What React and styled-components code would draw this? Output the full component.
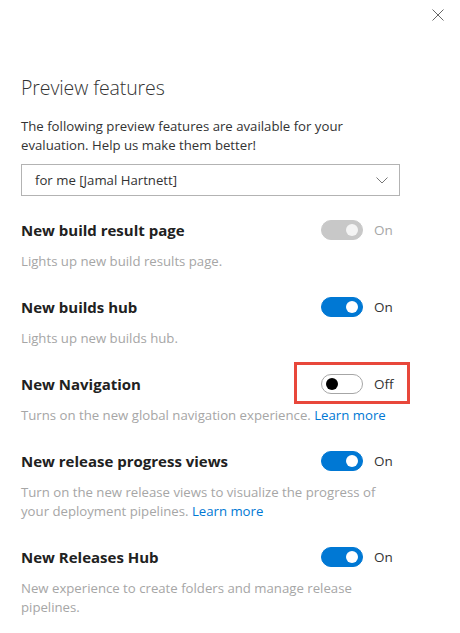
import React from 'react';
import styled, { createGlobalStyle } from 'styled-components';

const colors = {
    text: '#333333',
    heading: '#212121',
    muted: '#a6a6a6',
    blue: '#0078d4',
    border: '#b3b3b3',
    disabled: '#c8c8c8',
    red: '#e8473b',
};

const GlobalStyle = createGlobalStyle`
    body {
        margin: 0;
        background: #ffffff;
        font-family: "Open Sans", "Noto Sans", sans-serif;
        color: ${colors.text};
    }
`;

const Panel = styled.div`
    width: 460px;
    height: 633px;
    box-sizing: border-box;
    padding: 0 21px;
    overflow: hidden;
`;

const CloseBar = styled.div`
    display: flex;
    justify-content: flex-end;
    padding-top: 9px;
    margin-right: -5px;
    height: 12px;
`;

const CloseButton = styled.button`
    border: 0;
    background: none;
    padding: 0;
    width: 12px;
    height: 12px;
    display: flex;
    cursor: pointer;
`;

const Title = styled.h1`
    margin: 53px 0 0;
    font-size: 19.5px;
    font-weight: 300;
    line-height: 28px;
    letter-spacing: -0.1px;
    color: ${colors.text};
`;

const Intro = styled.p`
    margin: 15px 0 0;
    font-size: 13.2px;
    line-height: 19px;
    width: 340px;
`;

const Select = styled.div`
    margin-top: 9px;
    width: 379px;
    height: 32px;
    box-sizing: border-box;
    border: 1px solid ${colors.border};
    display: flex;
    align-items: center;
    justify-content: space-between;
    padding: 0 11px 0 13px;
    font-size: 13.2px;
`;

const FeatureList = styled.div`
    margin-top: 24px;
    width: 379px;
`;

const Feature = styled.section`
    & + & {
        margin-top: ${p => p.gap || 25}px;
    }
`;

const FeatureHead = styled.div`
    display: flex;
    align-items: center;
    justify-content: space-between;
    height: 20px;
`;

const FeatureName = styled.h2`
    margin: 0;
    font-size: 15px;
    font-weight: 700;
    color: ${colors.heading};
`;

const ToggleGroup = styled.div`
    position: relative;
    width: 80px;
    display: flex;
    align-items: center;
    gap: 11px;
    margin-right: -1px;
`;

const Track = styled.span`
    width: 42px;
    height: 20px;
    box-sizing: border-box;
    border-radius: 10px;
    display: flex;
    align-items: center;
    justify-content: ${p => (p.on ? 'flex-end' : 'flex-start')};
    padding: 0 4px;
    background: ${p => (p.disabled ? colors.disabled : p.on ? colors.blue : '#ffffff')};
    border: 1px solid ${p => (p.disabled ? colors.disabled : p.on ? colors.blue : '#a6a6a6')};
`;

const Knob = styled.span`
    width: 12px;
    height: 12px;
    border-radius: 50%;
    background: ${p => (p.on ? (p.disabled ? '#f4f4f4' : '#ffffff') : '#000000')};
`;

const ToggleLabel = styled.span`
    font-size: 13.5px;
    color: ${p => (p.disabled ? colors.muted : colors.text)};
`;

const Highlight = styled.span`
    position: absolute;
    left: -27px;
    right: -9px;
    top: -12px;
    bottom: -10px;
    border: 3px solid ${colors.red};
`;

const Description = styled.p`
    margin: 12px 0 0;
    font-size: 13.2px;
    line-height: 19px;
    color: ${colors.muted};
    width: ${p => p.width || 'auto'};

    a {
        color: ${colors.blue};
        text-decoration: none;
    }
`;

const features = [
    {
        name: 'New build result page',
        desc: 'Lights up new build results page.',
        on: true,
        disabled: true,
    },
    {
        name: 'New builds hub',
        desc: 'Lights up new builds hub.',
        on: true,
        gap: 26,
    },
    {
        name: 'New Navigation',
        desc: 'Turns on the new global navigation experience.',
        link: true,
        on: false,
        highlight: true,
    },
    {
        name: 'New release progress views',
        desc: 'Turn on the new release views to visualize the progress of your deployment pipelines.',
        link: true,
        on: true,
        width: '360px',
        gap: 26,
    },
    {
        name: 'New Releases Hub',
        desc: 'New experience to create folders and manage release pipelines.',
        on: true,
        width: '340px',
        gap: 26,
    },
];

const Toggle = ({ on, disabled, highlight }) => (
    <ToggleGroup>
        <Track on={on} disabled={disabled}>
            <Knob on={on} disabled={disabled} />
        </Track>
        <ToggleLabel disabled={disabled}>{on ? 'On' : 'Off'}</ToggleLabel>
        {highlight && <Highlight />}
    </ToggleGroup>
);

const App = () => (
    <>
        <GlobalStyle />
        <Panel>
            <CloseBar>
                <CloseButton aria-label="Close">
                    <svg width="12" height="12" viewBox="0 0 12 12">
                        <path d="M0.5 0.5 L11.5 11.5 M11.5 0.5 L0.5 11.5" stroke="#666" strokeWidth="1" fill="none" />
                    </svg>
                </CloseButton>
            </CloseBar>
            <Title>Preview features</Title>
            <Intro>The following preview features are available for your evaluation. Help us make them better!</Intro>
            <Select>
                <span>for me [Jamal Hartnett]</span>
                <svg width="12" height="7" viewBox="0 0 12 7">
                    <path d="M0.5 0.5 L6 6 L11.5 0.5" stroke="#777" strokeWidth="1" fill="none" />
                </svg>
            </Select>
            <FeatureList>
                {features.map(f => (
                    <Feature key={f.name} gap={f.gap}>
                        <FeatureHead>
                            <FeatureName>{f.name}</FeatureName>
                            <Toggle on={f.on} disabled={f.disabled} highlight={f.highlight} />
                        </FeatureHead>
                        <Description width={f.width}>
                            {f.desc}
                            {f.link && <> <a href="#learn">Learn more</a></>}
                        </Description>
                    </Feature>
                ))}
            </FeatureList>
        </Panel>
    </>
);

export default App;
